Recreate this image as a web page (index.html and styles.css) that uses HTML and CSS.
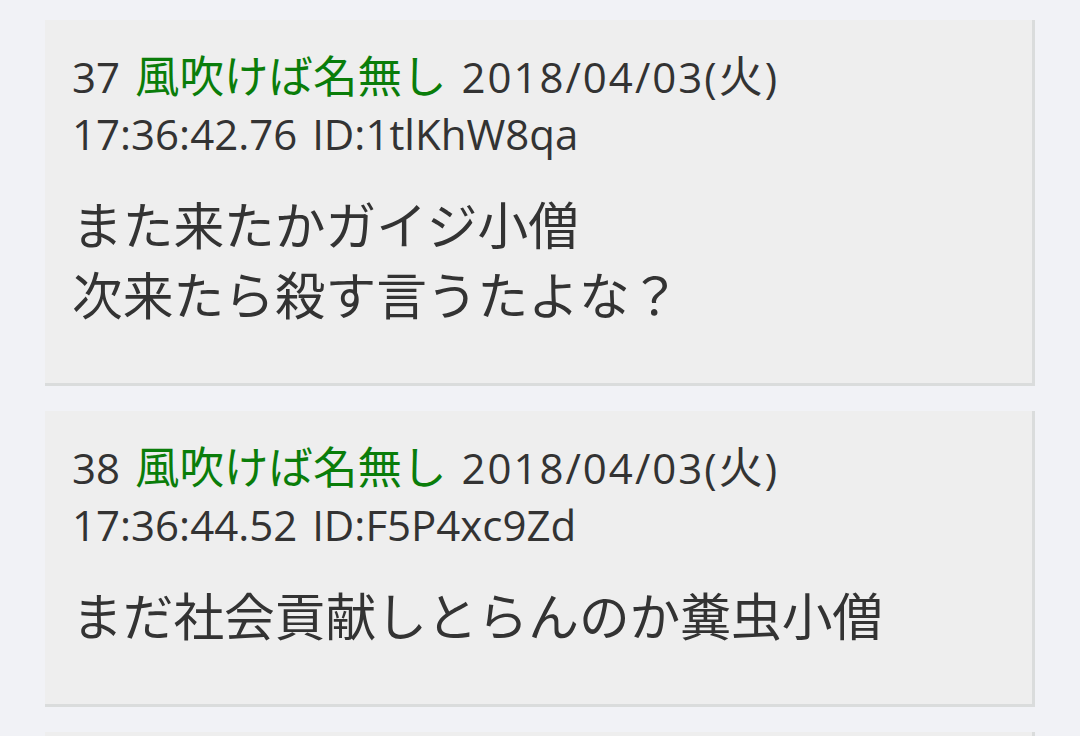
FILE: index.html
```html
<!DOCTYPE html>
<html lang="ja">
<head>
  <meta charset="UTF-8">
  <meta name="viewport" content="width=device-width, initial-scale=1.0">
  <title>風吹けば名無し</title>
  <link rel="stylesheet" href="styles.css">
</head>
<body>
  <main class="thread">
    <div class="post">
      <div class="post-head">
        <span class="num">37</span>
        <span class="name">風吹けば名無し</span>
        <span class="date">2018/04/03(<span class="jp">火</span>)</span><br>
        <span class="time">17:36:42.76</span>
        <span class="uid">ID:1tlKhW8qa</span>
      </div>
      <div class="post-body">
        また来たかガイジ小僧<br>
        次来たら殺す言うたよな？
      </div>
    </div>

    <div class="post">
      <div class="post-head">
        <span class="num">38</span>
        <span class="name">風吹けば名無し</span>
        <span class="date">2018/04/03(<span class="jp">火</span>)</span><br>
        <span class="time">17:36:44.52</span>
        <span class="uid">ID:F5P4xc9Zd</span>
      </div>
      <div class="post-body">
        まだ社会貢献しとらんのか糞虫小僧
      </div>
    </div>

    <div class="post post-next"></div>
  </main>
</body>
</html>
```

FILE: styles.css
```css
body {
  margin: 0;
  font-family: 'Open Sans', 'Noto Sans CJK JP', sans-serif;
  background-color: #f1f2f6;
  color: #333;
}

.thread {
  padding: 20px 45px;
}

.post {
  background: #eeeeee;
  border-right: 3px solid #dadcdc;
  border-bottom: 3px solid #dadcdc;
  padding: 25px 27px 55px;
  margin-bottom: 25px;
}

.post-next {
  height: 200px;
}

.post-head {
  font-size: 42px;
  line-height: 57px;
  word-spacing: 4px;
}

.post-head .name {
  color: #0a7d0a;
  font-family: 'Noto Sans CJK JP', sans-serif;
  font-size: 44.5px;
}

.post-head .date {
  letter-spacing: 2px;
}

.post-head .jp {
  font-family: 'Noto Sans CJK JP', sans-serif;
  font-size: 44px;
}

.post-body {
  margin-top: 26px;
  font-family: 'Noto Sans CJK JP', sans-serif;
  font-size: 50.7px;
  line-height: 70px;
}
```
